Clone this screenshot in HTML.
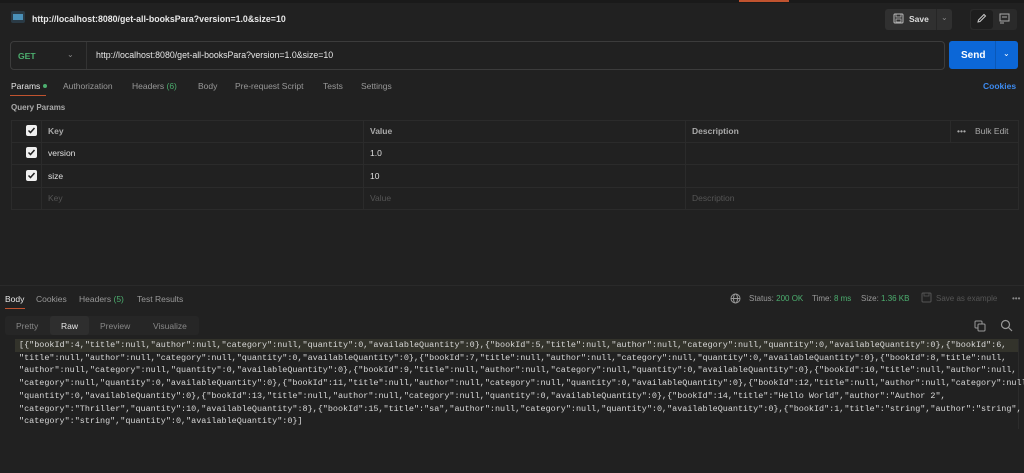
<!DOCTYPE html>
<html><head><meta charset="utf-8"><style>
*{margin:0;padding:0;box-sizing:border-box}
body{width:1024px;height:473px;background:#212121;font-family:"Liberation Sans",sans-serif;color:#d4d4d4;position:relative;overflow:hidden;font-size:8.5px}
.a{position:absolute}
.code{position:absolute;left:19px;top:339px;font-family:"Liberation Mono",monospace;font-size:8.45px;line-height:12.7px;color:#d8d8d8;white-space:pre}
.cb{width:11px;height:11px;background:#f0f0f0;border-radius:2px}
.cb svg{position:absolute;left:1px;top:1px}
</style></head><body>
<div class="a" style="left:0;top:0;width:1024px;height:3px;background:#1a1a1a"></div>
<div class="a" style="left:739px;top:0;width:50px;height:2px;background:#c0532f"></div>
<div class="a" style="left:11px;top:11px;width:14px;height:12px;background:#2a3a45;border-radius:2px"></div>
<div class="a" style="left:13px;top:14px;width:10px;height:6px;background:#4a90b8"></div>
<div class="a" style="left:32px;top:14px;font-weight:bold;font-size:8.8px;color:#e8e8e8">http://localhost:8080/get-all-booksPara?version=1.0&amp;size=10</div>
<div class="a" style="left:885px;top:9px;width:67px;height:21px;background:#303030;border-radius:3px"></div>
<div class="a" style="left:936px;top:9px;width:1px;height:21px;background:#262626"></div>
<svg class="a" style="left:893px;top:13px" width="11" height="11" viewBox="0 0 11 11"><rect x="1" y="1" width="9" height="9" rx="1" fill="none" stroke="#bbb"/><rect x="3" y="1" width="5" height="3" fill="none" stroke="#bbb" stroke-width=".8"/><rect x="3" y="6" width="5" height="3" fill="none" stroke="#bbb" stroke-width=".8"/></svg>
<div class="a" style="left:909px;top:14px;font-weight:bold;color:#ddd">Save</div>
<div class="a" style="left:941px;top:13px;color:#888;font-size:8px">⌄</div>
<div class="a" style="left:970px;top:9px;width:47px;height:21px;background:#2a2a2a;border-radius:3px"></div>
<div class="a" style="left:971px;top:10px;width:22px;height:19px;background:#1e1e1e;border-radius:3px"></div>
<svg class="a" style="left:976px;top:13px" width="11" height="11" viewBox="0 0 11 11"><path d="M2 9 L2.5 7 L8 1.5 L9.5 3 L4 8.5 Z" fill="none" stroke="#ccc" stroke-width="1"/></svg>
<svg class="a" style="left:999px;top:13px" width="11" height="11" viewBox="0 0 11 11"><rect x="1" y="1" width="9" height="7" fill="none" stroke="#aaa"/><path d="M3 4 H8 M1 10 H5" stroke="#aaa"/></svg>
<div class="a" style="left:10px;top:41px;width:935px;height:29px;border:1px solid #3c3c3c;border-radius:4px;background:#212121"></div>
<div class="a" style="left:86px;top:42px;width:1px;height:27px;background:#333"></div>
<div class="a" style="left:18px;top:51px;font-weight:bold;color:#4caf6f;font-size:8.6px">GET</div>
<div class="a" style="left:67px;top:50px;color:#888;font-size:8px">⌄</div>
<div class="a" style="left:96px;top:50px;color:#e8e8e8;font-size:8.8px">http://localhost:8080/get-all-booksPara?version=1.0&amp;size=10</div>
<div class="a" style="left:949px;top:41px;width:69px;height:28px;background:#0c67d7;border-radius:3px"></div>
<div class="a" style="left:995px;top:41px;width:1px;height:28px;background:#0a58b8"></div>
<div class="a" style="left:961px;top:50px;font-weight:bold;color:#fff;font-size:10px">Send</div>
<div class="a" style="left:1003px;top:49px;color:#fff;font-size:8px">⌄</div>
<div class="a" style="left:11px;top:81px;color:#e8e8e8">Params</div>
<div class="a" style="left:43px;top:84px;width:4px;height:4px;border-radius:50%;background:#4caf6f"></div>
<div class="a" style="left:10px;top:95px;width:36px;height:1px;background:#c0532f"></div>
<div class="a" style="left:63px;top:81px;color:#999">Authorization</div>
<div class="a" style="left:132px;top:81px;color:#999">Headers <span style="color:#4caf6f">(6)</span></div>
<div class="a" style="left:198px;top:81px;color:#999">Body</div>
<div class="a" style="left:235px;top:81px;color:#999">Pre-request Script</div>
<div class="a" style="left:323px;top:81px;color:#999">Tests</div>
<div class="a" style="left:361px;top:81px;color:#999">Settings</div>
<div class="a" style="left:983px;top:81px;color:#3d8bf0;font-weight:bold">Cookies</div>
<div class="a" style="left:11px;top:103px;color:#aaa;font-weight:bold;font-size:8px">Query Params</div>
<div class="a" style="left:11px;top:120px;width:1008px;height:90px;border:1px solid #2b2b2b"></div>
<div class="a" style="left:11px;top:142px;width:1008px;height:1px;background:#2b2b2b"></div>
<div class="a" style="left:11px;top:164px;width:1008px;height:1px;background:#2b2b2b"></div>
<div class="a" style="left:11px;top:187px;width:1008px;height:1px;background:#2b2b2b"></div>
<div class="a" style="left:41px;top:120px;width:1px;height:90px;background:#2b2b2b"></div>
<div class="a" style="left:363px;top:120px;width:1px;height:90px;background:#2b2b2b"></div>
<div class="a" style="left:685px;top:120px;width:1px;height:90px;background:#2b2b2b"></div>
<div class="a" style="left:950px;top:120px;width:1px;height:22px;background:#2b2b2b"></div>
<div class="a cb" style="left:26px;top:125px"><svg width="9" height="9" viewBox="0 0 9 9"><path d="M1.5 4.5 L3.5 6.5 L7.5 2" fill="none" stroke="#222" stroke-width="1.5"/></svg></div>
<div class="a cb" style="left:26px;top:147px"><svg width="9" height="9" viewBox="0 0 9 9"><path d="M1.5 4.5 L3.5 6.5 L7.5 2" fill="none" stroke="#222" stroke-width="1.5"/></svg></div>
<div class="a cb" style="left:26px;top:170px"><svg width="9" height="9" viewBox="0 0 9 9"><path d="M1.5 4.5 L3.5 6.5 L7.5 2" fill="none" stroke="#222" stroke-width="1.5"/></svg></div>
<div class="a" style="left:48px;top:126px;color:#aaa;font-weight:bold">Key</div>
<div class="a" style="left:370px;top:126px;color:#aaa;font-weight:bold">Value</div>
<div class="a" style="left:692px;top:126px;color:#aaa;font-weight:bold">Description</div>
<div class="a" style="left:957px;top:126px;color:#aaa">•••</div>
<div class="a" style="left:975px;top:126px;color:#aaa">Bulk Edit</div>
<div class="a" style="left:48px;top:148px;color:#e0e0e0">version</div>
<div class="a" style="left:370px;top:148px;color:#e0e0e0">1.0</div>
<div class="a" style="left:48px;top:171px;color:#e0e0e0">size</div>
<div class="a" style="left:370px;top:171px;color:#e0e0e0">10</div>
<div class="a" style="left:48px;top:193px;color:#555">Key</div>
<div class="a" style="left:370px;top:193px;color:#555">Value</div>
<div class="a" style="left:692px;top:193px;color:#555">Description</div>
<div class="a" style="left:0;top:285px;width:1024px;height:1px;background:#2a2a2a"></div>
<div class="a" style="left:5px;top:294px;color:#e8e8e8">Body</div>
<div class="a" style="left:5px;top:308px;width:20px;height:1px;background:#c0532f"></div>
<div class="a" style="left:36px;top:294px;color:#999">Cookies</div>
<div class="a" style="left:79px;top:294px;color:#999">Headers <span style="color:#4caf6f">(5)</span></div>
<div class="a" style="left:137px;top:294px;color:#999">Test Results</div>
<svg class="a" style="left:730px;top:293px" width="11" height="11" viewBox="0 0 11 11"><circle cx="5.5" cy="5.5" r="4.5" fill="none" stroke="#999"/><ellipse cx="5.5" cy="5.5" rx="2" ry="4.5" fill="none" stroke="#999"/><path d="M1 5.5 H10" stroke="#999"/></svg>
<div class="a" style="left:749px;top:294px;color:#999;font-size:8px">Status: <span style="color:#4caf6f">200 OK</span></div>
<div class="a" style="left:812px;top:294px;color:#999;font-size:8px">Time: <span style="color:#4caf6f">8 ms</span></div>
<div class="a" style="left:861px;top:294px;color:#999;font-size:8px">Size: <span style="color:#4caf6f">1.36 KB</span></div>
<svg class="a" style="left:921px;top:292px" width="11" height="11" viewBox="0 0 11 11"><rect x="1" y="1" width="9" height="9" rx="1" fill="none" stroke="#555"/><rect x="3" y="1" width="5" height="3" fill="none" stroke="#555" stroke-width=".8"/></svg>
<div class="a" style="left:936px;top:294px;color:#555;font-size:8px">Save as example</div>
<div class="a" style="left:1012px;top:294px;color:#888;font-size:8px">•••</div>
<div class="a" style="left:5px;top:316px;width:194px;height:19px;background:#262626;border-radius:3px"></div>
<div class="a" style="left:50px;top:316px;width:39px;height:19px;background:#2e2e2e;border-radius:3px"></div>
<div class="a" style="left:16px;top:321px;color:#888">Pretty</div>
<div class="a" style="left:61px;top:321px;color:#e8e8e8">Raw</div>
<div class="a" style="left:100px;top:321px;color:#888">Preview</div>
<div class="a" style="left:153px;top:321px;color:#888">Visualize</div>
<svg class="a" style="left:974px;top:320px" width="12" height="12" viewBox="0 0 12 12"><rect x="1" y="1" width="7" height="7" rx="1" fill="none" stroke="#999"/><rect x="4" y="4" width="7" height="7" rx="1" fill="#212121" stroke="#999"/></svg>
<svg class="a" style="left:1000px;top:319px" width="13" height="13" viewBox="0 0 13 13"><circle cx="5.5" cy="5.5" r="4" fill="none" stroke="#999" stroke-width="1.2"/><path d="M8.5 8.5 L12 12" stroke="#999" stroke-width="1.2"/></svg>
<div class="a" style="left:15px;top:339px;width:1004px;height:13px;background:#33332b"></div>
<div class="a" style="left:1018px;top:339px;width:1px;height:90px;background:#2c2c2c"></div>
<div class="code">[{"bookId":4,"title":null,"author":null,"category":null,"quantity":0,"availableQuantity":0},{"bookId":5,"title":null,"author":null,"category":null,"quantity":0,"availableQuantity":0},{"bookId":6,
"title":null,"author":null,"category":null,"quantity":0,"availableQuantity":0},{"bookId":7,"title":null,"author":null,"category":null,"quantity":0,"availableQuantity":0},{"bookId":8,"title":null,
"author":null,"category":null,"quantity":0,"availableQuantity":0},{"bookId":9,"title":null,"author":null,"category":null,"quantity":0,"availableQuantity":0},{"bookId":10,"title":null,"author":null,
"category":null,"quantity":0,"availableQuantity":0},{"bookId":11,"title":null,"author":null,"category":null,"quantity":0,"availableQuantity":0},{"bookId":12,"title":null,"author":null,"category":null,
"quantity":0,"availableQuantity":0},{"bookId":13,"title":null,"author":null,"category":null,"quantity":0,"availableQuantity":0},{"bookId":14,"title":"Hello World","author":"Author 2",
"category":"Thriller","quantity":10,"availableQuantity":8},{"bookId":15,"title":"sa","author":null,"category":null,"quantity":0,"availableQuantity":0},{"bookId":1,"title":"string","author":"string",
"category":"string","quantity":0,"availableQuantity":0}]</div>
</body></html>
